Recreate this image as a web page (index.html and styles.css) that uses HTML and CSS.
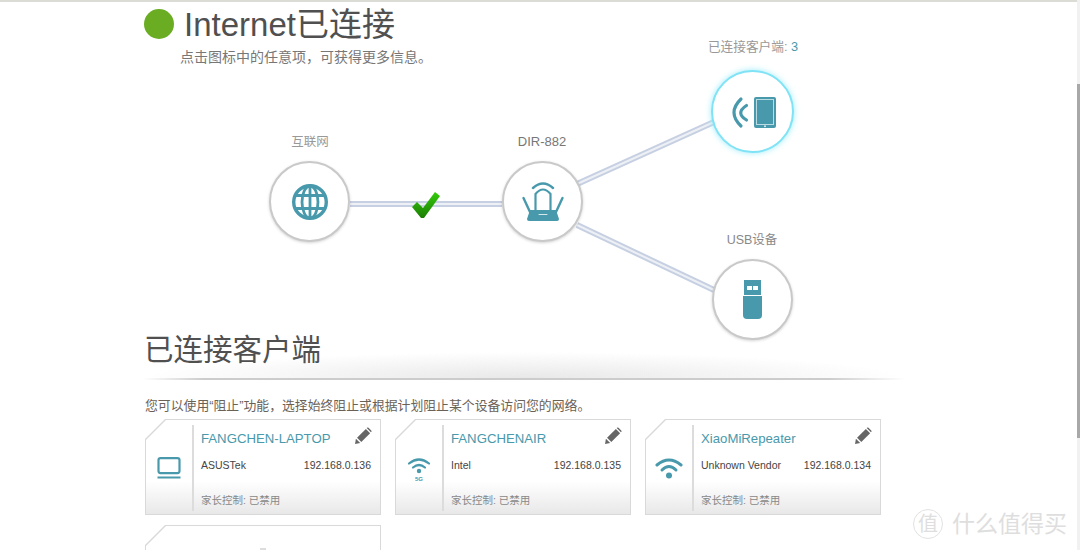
FILE: index.html
```html
<!DOCTYPE html>
<html>
<head>
    <meta charset="utf-8" />
    <title>Internet已连接</title>
    <link rel="stylesheet" href="styles.css">
</head>
<body>
    <div class="TopLine"></div>
    <div class="Page">
        <div class="Status">
            <span class="StatusDot"></span>
            <h1 class="StatusTitle">Internet已连接</h1>
        </div>
        <p class="StatusHint">点击图标中的任意项，可获得更多信息。</p>

        <div class="Diagram">
            <svg class="Lines" width="1080" height="340" viewBox="0 0 1080 340">
                <g class="LineOuter">
                    <path d="M350 135H502" />
                    <path d="M577 115L714 53" />
                    <path d="M577 156L714 221" />
                </g>
                <g class="LineInner">
                    <path d="M350 135H502" />
                    <path d="M577 115L714 53" />
                    <path d="M577 156L714 221" />
                </g>
            </svg>
            <svg class="Check" width="28" height="27" viewBox="0 0 28 27">
                <defs>
                    <linearGradient id="checkFill" x1="0" y1="0" x2="0" y2="1">
                        <stop offset="0" stop-color="#35cc0c" />
                        <stop offset="1" stop-color="#1c7d04" />
                    </linearGradient>
                </defs>
                <polygon points="0,15 5,10 11,16 23,0 28,4 12,26 9,26" fill="url(#checkFill)" />
            </svg>

            <div class="Label LabelInternet">互联网</div>
            <div class="Node NodeInternet">
                <svg width="38" height="38" viewBox="0 0 38 38" fill="none" stroke="#4899ac">
                    <circle cx="19" cy="19" r="16.3" stroke-width="3.4" />
                    <ellipse cx="19" cy="19" rx="8" ry="16" stroke-width="2.8" />
                    <path d="M19 3V35M3 12.5H35M3 25.5H35" stroke-width="2.8" />
                </svg>
            </div>

            <div class="Label LabelRouter">DIR-882</div>
            <div class="Node NodeRouter">
                <svg width="42" height="42" viewBox="0 0 42 42" fill="none" stroke="#4899ac" stroke-linecap="round">
                    <path d="M11 7Q21 -2 31 7" stroke-width="2.4" />
                    <path d="M13.5 29V13Q21 4 28.5 13V29" stroke-width="2.2" />
                    <path d="M1.5 17L8 31M40.5 17L34 31" stroke-width="2.4" />
                    <path d="M8 29H34L37 38Q37 40 35 40H7Q5 40 5 38Z" fill="#4899ac" stroke="none" />
                    <path d="M17 33.5H25" stroke="#d5e8ed" stroke-width="1" />
                </svg>
            </div>

            <div class="Label LabelClients">已连接客户端: <span class="Count">3</span></div>
            <div class="Node NodeClients">
                <svg width="46" height="35" viewBox="0 0 46 35" fill="none" stroke="#4899ac" stroke-linecap="round">
                    <path d="M11 5Q-3 18.5 11 32" stroke-width="3.2" />
                    <path d="M16.5 11.5Q5 19 16.5 26" stroke-width="3.2" />
                    <rect x="24" y="3" width="22" height="31" rx="2" fill="#4899ac" stroke="none" />
                    <rect x="26.5" y="5.5" width="17" height="25" fill="#4899ac" stroke="#b9dbe3" stroke-width="1" />
                    <path d="M35 32V32.5" stroke="#fff" stroke-width="1.5" />
                </svg>
            </div>

            <div class="Label LabelUsb">USB设备</div>
            <div class="Node NodeUsb">
                <svg width="20" height="40" viewBox="0 0 20 40" fill="#4899ac">
                    <rect x="1" y="0" width="17" height="15" />
                    <rect x="4" y="6" width="5" height="4" fill="#fff" />
                    <rect x="10" y="6" width="5" height="4" fill="#fff" />
                    <path d="M0 16H19V35Q19 39 15 39H4Q0 39 0 35Z" />
                </svg>
            </div>
        </div>

        <h2 class="SectionTitle">已连接客户端</h2>
        <div class="SectionRule"></div>
        <p class="SectionText">您可以使用“阻止”功能，选择始终阻止或根据计划阻止某个设备访问您的网络。</p>

        <div class="Cards">
            <div class="Card">
                <div class="CardInner">
                    <div class="CardIcon">
                        <svg width="24" height="22" viewBox="0 0 24 22" fill="none" stroke="#4899ac" stroke-width="2.2">
                            <rect x="1.5" y="1.1" width="21" height="15" rx="2" />
                            <path d="M0.5 20.5H23.5" />
                        </svg>
                    </div>
                    <div class="CardBody">
                        <div class="CardHead">
                            <span class="CardName">FANGCHEN-LAPTOP</span>
                            <svg class="Pencil" width="17" height="17" viewBox="0 0 18 18">
                                <path d="M0 18L1 12.5L5.5 17Z" />
                                <path d="M2.2 11.3L11.5 2L16 6.5L6.7 15.8Z" />
                                <path d="M12.7 0.8Q13.5 0 14.3 0.8L17.2 3.7Q18 4.5 17.2 5.3L16.9 5.6L12.4 1.1Z" />
                            </svg>
                        </div>
                        <div class="CardInfo"><span>ASUSTek</span><span>192.168.0.136</span></div>
                        <div class="CardFoot">家长控制: 已禁用</div>
                    </div>
                </div>
            </div>
            <div class="Card">
                <div class="CardInner">
                    <div class="CardIcon">
                        <svg class="Wifi5g" width="24" height="26" viewBox="0 0 24 26" fill="none" stroke="#4899ac" stroke-width="2.2" stroke-linecap="round">
                            <path d="M2 6.5Q12 -1.5 22 6.5" />
                            <path d="M6 10.5Q12 5.5 18 10.5" />
                            <circle cx="12" cy="14" r="2.2" fill="#4899ac" stroke="none" />
                            <text x="12" y="24" class="WifiText">5G</text>
                        </svg>
                    </div>
                    <div class="CardBody">
                        <div class="CardHead">
                            <span class="CardName">FANGCHENAIR</span>
                            <svg class="Pencil" width="17" height="17" viewBox="0 0 18 18">
                                <path d="M0 18L1 12.5L5.5 17Z" />
                                <path d="M2.2 11.3L11.5 2L16 6.5L6.7 15.8Z" />
                                <path d="M12.7 0.8Q13.5 0 14.3 0.8L17.2 3.7Q18 4.5 17.2 5.3L16.9 5.6L12.4 1.1Z" />
                            </svg>
                        </div>
                        <div class="CardInfo"><span>Intel</span><span>192.168.0.135</span></div>
                        <div class="CardFoot">家长控制: 已禁用</div>
                    </div>
                </div>
            </div>
            <div class="Card">
                <div class="CardInner">
                    <div class="CardIcon">
                        <svg width="28" height="22" viewBox="0 0 28 22" fill="none" stroke="#4899ac" stroke-width="3" stroke-linecap="round">
                            <path d="M2 8Q14 -2 26 8" />
                            <path d="M7 13Q14 6 21 13" />
                            <circle cx="14" cy="18.5" r="3" fill="#4899ac" stroke="none" />
                        </svg>
                    </div>
                    <div class="CardBody">
                        <div class="CardHead">
                            <span class="CardName">XiaoMiRepeater</span>
                            <svg class="Pencil" width="17" height="17" viewBox="0 0 18 18">
                                <path d="M0 18L1 12.5L5.5 17Z" />
                                <path d="M2.2 11.3L11.5 2L16 6.5L6.7 15.8Z" />
                                <path d="M12.7 0.8Q13.5 0 14.3 0.8L17.2 3.7Q18 4.5 17.2 5.3L16.9 5.6L12.4 1.1Z" />
                            </svg>
                        </div>
                        <div class="CardInfo"><span>Unknown Vendor</span><span>192.168.0.134</span></div>
                        <div class="CardFoot">家长控制: 已禁用</div>
                    </div>
                </div>
            </div>
            <div class="Card">
                <div class="CardInner CardInnerAdd">
                    <div class="CardAdd"></div>
                </div>
            </div>
        </div>
    </div>
    <div class="Watermark"><span class="WatermarkBadge">值</span><span>什么值得买</span></div>
    <div class="Scrollbar"><div class="ScrollThumb"></div></div>
</body>
</html>
```

FILE: styles.css
```css
html, body {
    margin: 0;
    height: 550px;
    overflow: hidden;
    background-color: white;
}
body {
    font-family: "Liberation Sans", "Noto Sans CJK SC", sans-serif;
}
.TopLine {
    height: 2px;
    background-color: #dcdcd6;
}
.Page {
    padding-left: 144px;
}

/* status header */
.Status {
    display: flex;
    align-items: center;
    gap: 10px;
    height: 43px;
}
.StatusDot {
    width: 30px;
    height: 30px;
    border-radius: 50%;
    background-color: #6aad23;
}
.StatusTitle {
    margin: -4px 0 0 0;
    font-size: 33px;
    font-weight: normal;
    color: #505050;
}
.StatusHint {
    margin: 3px 0 0 36px;
    font-size: 14px;
    line-height: 18px;
    color: #777;
}

/* diagram, nodes sit on a free canvas */
.Diagram {
    position: relative;
    height: 261px;
    margin: 3px 0 0 -144px;
}
.Lines {
    position: absolute;
    left: 0;
    top: 0;
}
.LineOuter path {
    fill: none;
    stroke: #c6d0e2;
    stroke-width: 6;
}
.LineInner path {
    fill: none;
    stroke: #edf0f5;
    stroke-width: 2;
}
.Check {
    position: absolute;
    left: 412px;
    top: 123px;
}
.Node {
    position: absolute;
    width: 77px;
    height: 77px;
    border: 2px solid #c9c9c9;
    border-radius: 50%;
    background-color: white;
    box-shadow: 0 1px 3px rgba(0, 0, 0, 0.18);
    display: flex;
    align-items: center;
    justify-content: center;
}
.NodeInternet { left: 269px; top: 92px; }
.NodeRouter { left: 502px; top: 92px; }
.NodeClients {
    left: 711px;
    top: 1px;
    width: 79px;
    height: 79px;
    border-color: #7fe3f5;
    box-shadow: 0 0 6px #9decfa;
}
.NodeUsb { left: 712px; top: 190px; }
.Label {
    position: absolute;
    font-size: 12.5px;
    line-height: 16px;
    color: #999;
    white-space: nowrap;
    transform: translateX(-50%);
}
.LabelInternet { left: 310px; top: 65px; }
.LabelRouter { left: 542px; top: 65px; color: #777; font-size: 13px; }
.LabelClients { left: 753px; top: -30px; font-size: 12.7px; }
.LabelUsb { left: 752px; top: 163px; color: #888; }
.Count {
    color: #4899ac;
}

/* clients section */
.SectionTitle {
    margin: 0;
    font-size: 29.5px;
    line-height: 40px;
    font-weight: normal;
    color: #505050;
}
.SectionRule {
    height: 26px;
    width: 760px;
    margin-top: -18px;
    border-bottom: 2px solid;
    border-image: linear-gradient(to right, transparent, #ccc 8%, #ccc 90%, transparent) 1;
    background: radial-gradient(ellipse 50% 100% at 50% 100%, #e8e8e8, transparent);
}
.SectionText {
    margin: 17px 0 0 1px;
    font-size: 12.85px;
    line-height: 18px;
    color: #6b6257;
}
.Cards {
    display: grid;
    grid-template-columns: repeat(3, 236px);
    column-gap: 14px;
    row-gap: 10px;
    margin: 4px 0 0 1px;
}
.Card {
    height: 96px;
    background-color: #d9d9d9;
    clip-path: polygon(20px 0, 100% 0, 100% 100%, 0 100%, 0 20px);
}
.CardInner {
    display: flex;
    height: 94px;
    margin: 1px;
    box-sizing: border-box;
    padding: 5px 0 3px 0;
    background: linear-gradient(to bottom, white 65%, #e8e8e8 100%);
    clip-path: polygon(20px 0, 100% 0, 100% 100%, 0 100%, 0 20px);
}
.CardInnerAdd {
    justify-content: center;
    background: white;
}
.CardAdd {
    width: 6px;
    height: 6px;
    margin-top: 17px;
    background-color: #ddd;
}
.CardIcon {
    width: 46px;
    flex: none;
    border-right: 2px solid #dcdcdc;
    display: flex;
    align-items: center;
    justify-content: center;
}
.Wifi5g {
    margin-top: 4px;
}
.CardBody {
    flex: 1;
    min-width: 0;
    padding: 0 9px 4px 7px;
    display: flex;
    flex-direction: column;
}
.CardHead {
    display: flex;
    justify-content: space-between;
    align-items: flex-start;
    box-sizing: border-box;
    height: 30px;
    padding-top: 4px;
}
.CardName {
    font-size: 13.2px;
    line-height: 20px;
    color: #4899ac;
}
.Pencil {
    margin: -2px -1px 0 0;
    fill: #666;
}
.CardInfo {
    display: flex;
    justify-content: space-between;
    margin-top: 3px;
    font-size: 10.5px;
    line-height: 14px;
    color: #444;
}
.CardFoot {
    margin-top: auto;
    font-size: 10.5px;
    line-height: 14px;
    color: #888;
}
.WifiText {
    font-size: 6px;
    font-weight: bold;
    fill: #4899ac;
    stroke: none;
    text-anchor: middle;
}

/* overlays */
.Watermark {
    position: absolute;
    left: 913px;
    top: 509px;
    display: flex;
    align-items: center;
    gap: 9px;
    font-size: 23px;
    line-height: 30px;
    color: #dedede;
}
.WatermarkBadge {
    width: 28px;
    height: 28px;
    border-radius: 50%;
    border: 1px solid #e2e2e2;
    font-size: 20px;
    line-height: 28px;
    text-align: center;
}
.Scrollbar {
    position: absolute;
    right: 0;
    top: 0;
    width: 3px;
    height: 550px;
    background-color: #f1f1f1;
}
.ScrollThumb {
    margin-top: 84px;
    height: 354px;
    background-color: #a8a8a8;
}
```
